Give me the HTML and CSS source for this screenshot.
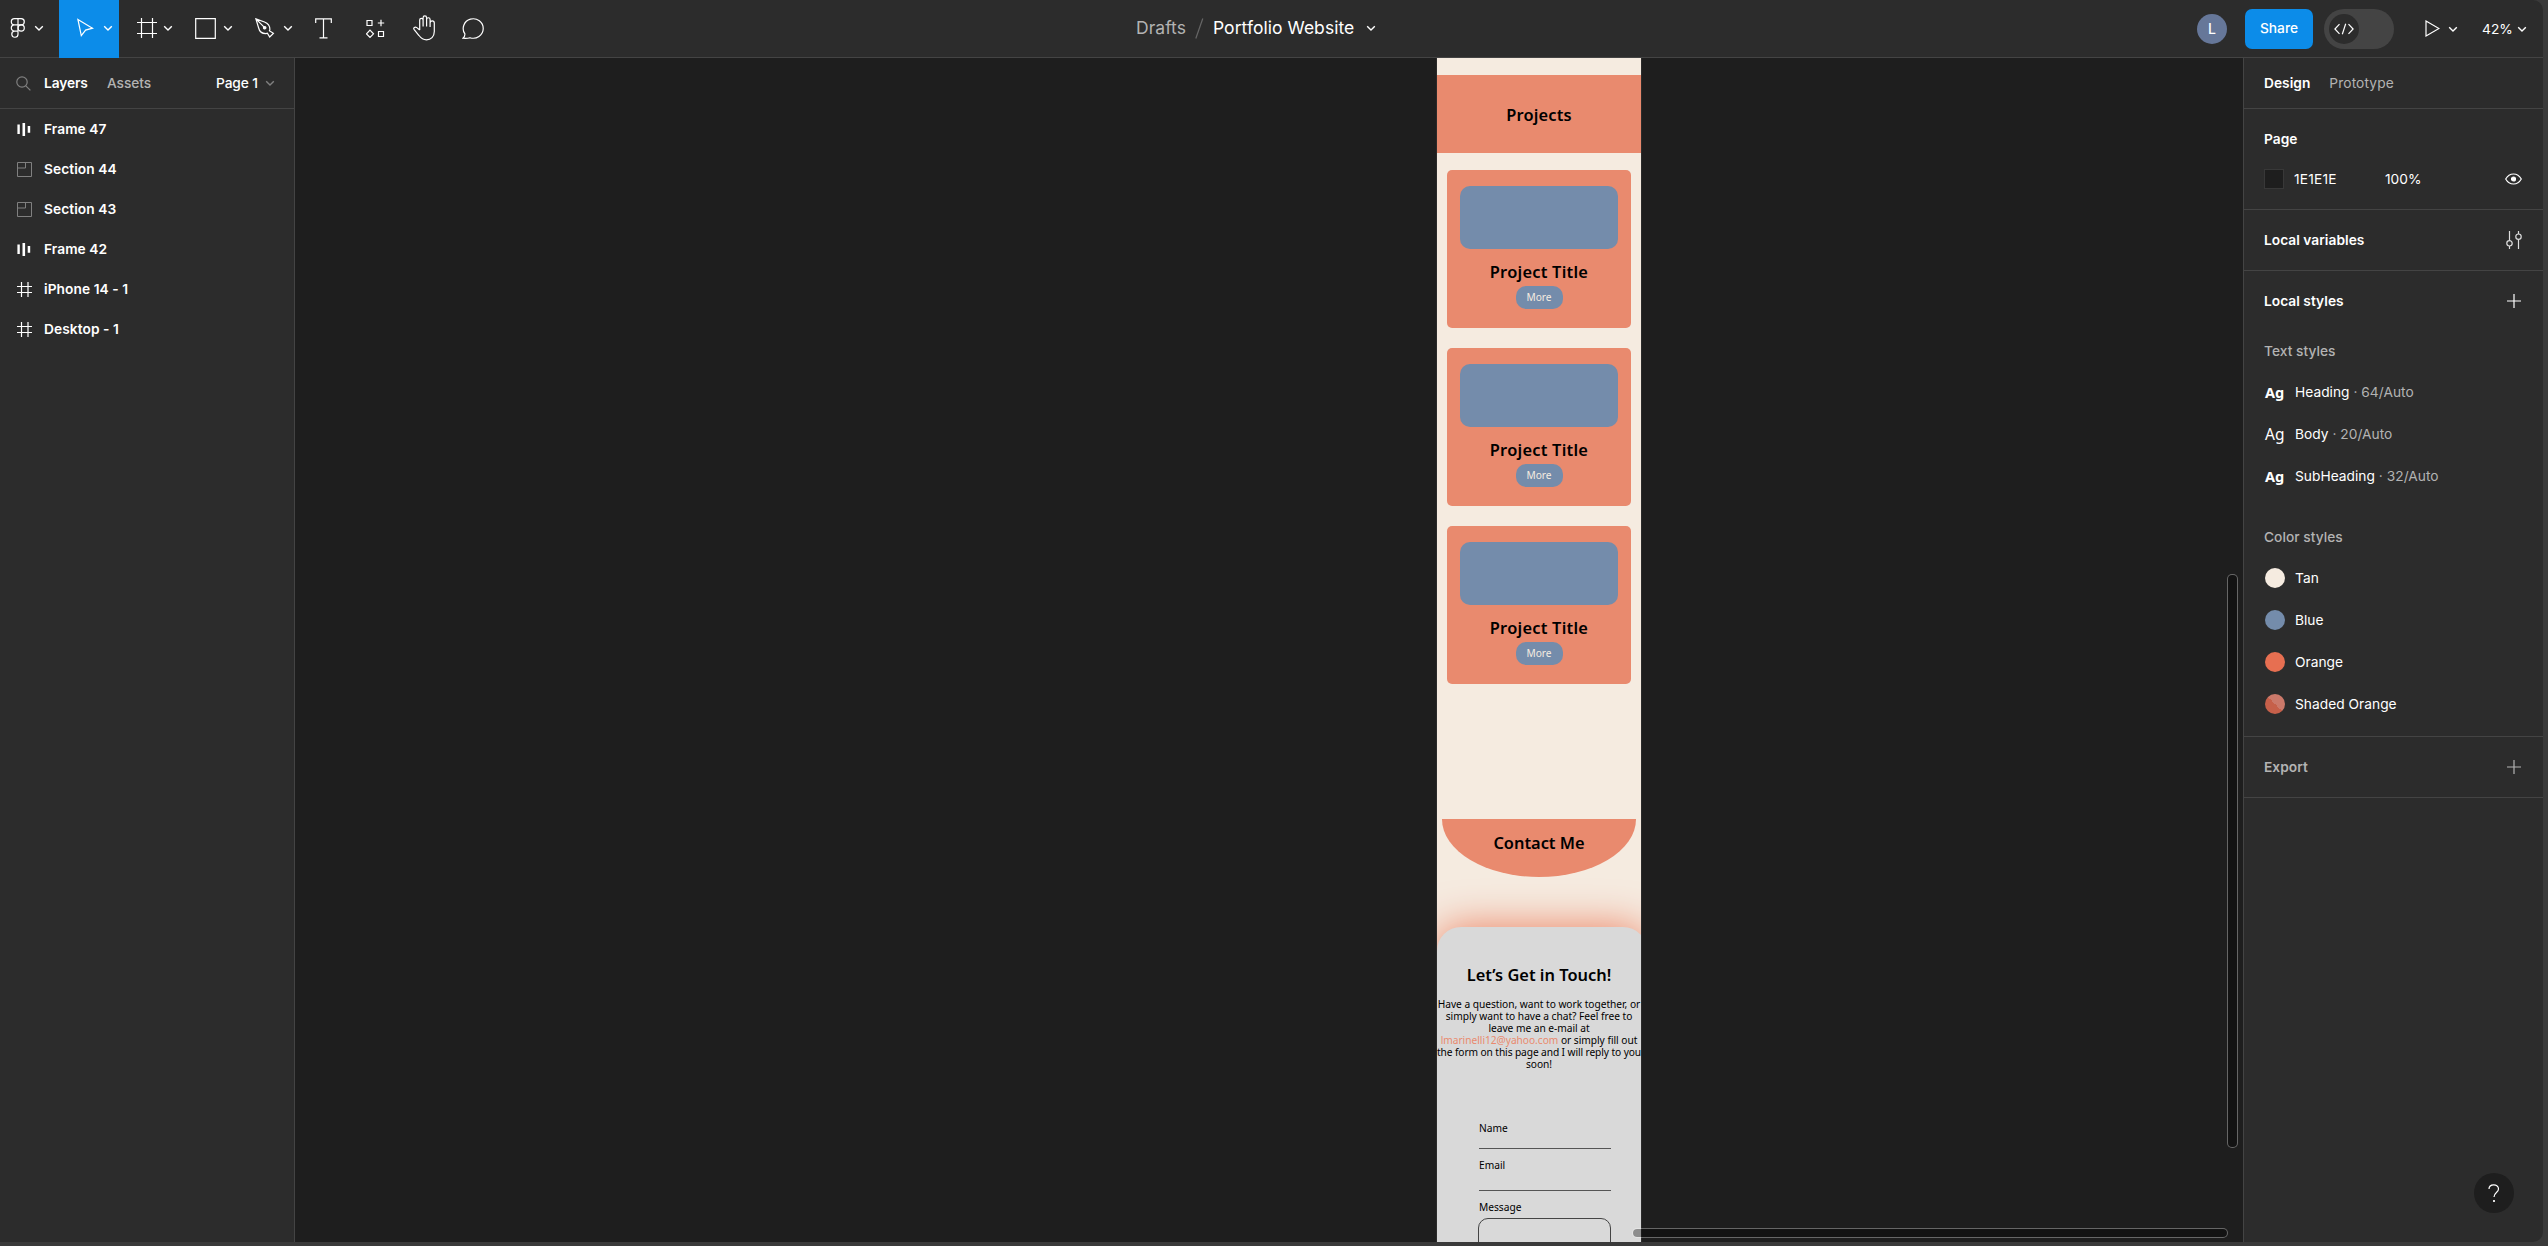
FILE: index.html
```html
<!DOCTYPE html>
<html lang="en">
<head>
<meta charset="utf-8">
<title>Portfolio Website</title>
<link rel="stylesheet" href="styles.css">
</head>
<body>
<svg class="defs" width="0" height="0">
  <symbol id="chev" viewBox="0 0 10 8"><path d="M1.2 2.2 5 5.9 8.8 2.2"/></symbol>
  <symbol id="autolayout" viewBox="0 0 15 15"><path class="solid" d="M.4 2.500h2.400v9.600H.4zM5.500 1h2.600v13H5.500zM10.700 4h2.500v6.800h-2.500z"/></symbol>
  <symbol id="section" viewBox="0 0 15 15"><path d="M.5.5h14v14H.5zM.5 6h8V.5"/></symbol>
  <symbol id="frame" viewBox="0 0 15 15"><path d="M4.500 0v15M11 0v15M0 4.500h15M0 10.500h15"/></symbol>
  <symbol id="plus" viewBox="0 0 14 14"><path d="M7 0v14M0 7h14"/></symbol>
</svg>
<div class="app">
  <header class="toolbar">
    <nav class="tools">
      <div class="tool menu">
        <svg width="16" height="22" viewBox="0 0 16 22"><path d="M8 1.700H4.400a3.100 3.100 0 0 0 0 6.200H8zM8 1.700h3.200a3.100 3.100 0 0 1 0 6.200H8zM8 7.900H4.400a3.100 3.100 0 0 0 0 6.200H8zM8 14.100H4.400A3.100 3.100 0 1 0 8 17.200z"/><circle cx="11.200" cy="11" r="3.100"/></svg>
        <svg class="chev" width="10" height="8"><use href="#chev"/></svg>
      </div>
      <div class="tool select">
        <svg width="18" height="20" viewBox="0 0 18 20"><path d="M1.900 1.400 16.500 10.200l-6.900 1.900-4.300 5.500z"/></svg>
        <svg class="chev" width="10" height="8"><use href="#chev"/></svg>
      </div>
      <div class="tool frame-tool">
        <svg width="20" height="20" viewBox="0 0 20 20"><path d="M4.500 0v20M15.500 0v20M0 4.500h20M0 15.500h20"/></svg>
        <svg class="chev" width="10" height="8"><use href="#chev"/></svg>
      </div>
      <div class="tool shape-tool">
        <svg width="21" height="21" viewBox="0 0 21 21"><path d="M.7.7h19.600v19.600H.7z"/></svg>
        <svg class="chev" width="10" height="8"><use href="#chev"/></svg>
      </div>
      <div class="tool pen-tool">
        <svg width="20" height="20" viewBox="0 0 20 20"><path d="M.9.900 9.500 4c3.500 1.300 5.400 4 5.400 7.500l-.5 1.300 4 2.500-3.700 3.700-2.300-3.800-1.500.4C7 15.600 4.300 13.200 3.500 9.500zM.9.9l8 8"/><circle class="dot" cx="9.700" cy="9.700" r="1.200"/></svg>
        <svg class="chev" width="10" height="8"><use href="#chev"/></svg>
      </div>
      <div class="tool text-tool">
        <svg width="17" height="21" viewBox="0 0 17 21"><path d="M.7 5V.9h15.600V5M8.500.9v19M4.500 19.900h8"/></svg>
      </div>
      <div class="tool resources">
        <svg width="19" height="19" viewBox="0 0 19 19"><path d="M1 1.500h5v5H1zM12.500 12.500h5v5h-5zM15 .8v6.400M11.800 4h6.400M4 11.200l3.500 3.600L4 18.400.5 14.800z"/></svg>
      </div>
      <div class="tool hand">
        <svg width="23" height="26" viewBox="0 0 23 26"><path d="M6.700 15V5a1.700 1.700 0 0 1 3.400 0M10.100 11.500V2.700a1.700 1.700 0 0 1 3.500 0V11.500M13.600 4.500a1.700 1.700 0 0 1 3.500 0v7.500M17.100 8a1.800 1.800 0 0 1 4.200 0v8.500c0 5.200-3.400 8.300-7.800 8.300-3.500 0-5.300-1.300-7.500-4.300L1 14.300c-.9-1.400 1-2.900 2.500-1.900L6.700 15M10.100 5v6.500"/></svg>
      </div>
      <div class="tool comment">
        <svg width="23" height="21" viewBox="0 0 23 21"><path d="M1 20.200c1.500-1.400 2-2.400 1.900-4.300A10 9.700 0 1 1 8 19.700c-2.300.7-4.500.7-7 .5z"/></svg>
      </div>
    </nav>
    <div class="title">
      <span class="drafts">Drafts</span>
      <svg width="9" height="21" viewBox="0 0 9 21"><path class="slash" d="M.8 20.500 7.800.5"/></svg>
      <span class="name">Portfolio Website</span>
      <svg class="chev" width="10" height="8"><use href="#chev"/></svg>
    </div>
    <div class="actions">
      <div class="avatar">L</div>
      <div class="share">Share</div>
      <div class="toggle"><div class="knob">
        <svg width="20" height="12" viewBox="0 0 20 12"><path d="M5.500 1.200.9 6l4.600 4.800M14.500 1.200 19.100 6l-4.600 4.800M11.700.8 8.300 11.200"/></svg>
      </div></div>
      <svg class="play" width="15" height="17" viewBox="0 0 15 17"><path d="M1 1v15l13-7.500z"/></svg>
      <svg class="chev" width="10" height="8"><use href="#chev"/></svg>
      <span class="zoom">42%</span>
      <svg class="chev" width="10" height="8"><use href="#chev"/></svg>
    </div>
  </header>
  <div class="body">
    <aside class="left">
      <div class="tabs">
        <svg class="search" width="15" height="15" viewBox="0 0 15 15"><circle cx="6" cy="6" r="5.200"/><path d="m9.800 9.800 4.600 4.600"/></svg>
        <b class="layers-tab">Layers</b><span class="assets-tab">Assets</span>
        <span class="page-name">Page 1</span>
        <svg class="chev dim" width="10" height="8"><use href="#chev"/></svg>
      </div>
      <ul class="layers">
        <li><svg width="15" height="15"><use href="#autolayout"/></svg>Frame 47</li>
        <li class="sec"><svg width="15" height="15"><use href="#section"/></svg>Section 44</li>
        <li class="sec"><svg width="15" height="15"><use href="#section"/></svg>Section 43</li>
        <li><svg width="15" height="15"><use href="#autolayout"/></svg>Frame 42</li>
        <li><svg width="15" height="15"><use href="#frame"/></svg>iPhone 14 - 1</li>
        <li><svg width="15" height="15"><use href="#frame"/></svg>Desktop - 1</li>
      </ul>
    </aside>
    <main class="canvas">
      <div class="phone">
        <div class="projects"><h2>Projects</h2></div>
        <div class="cards">
          <div class="card"><div class="thumb"></div><h2>Project Title</h2><div class="more">More</div></div>
          <div class="card"><div class="thumb"></div><h2>Project Title</h2><div class="more">More</div></div>
          <div class="card"><div class="thumb"></div><h2>Project Title</h2><div class="more">More</div></div>
        </div>
        <div class="contact"><h2>Contact Me</h2></div>
        <div class="touch">
          <h2>Let’s Get in Touch!</h2>
          <div class="copy">
            <p>Have a question, want to work together, or</p>
            <p>simply want to have a chat? Feel free to</p>
            <p>leave me an e-mail at</p>
            <p><span>lmarinelli12@yahoo.com</span> or simply fill out</p>
            <p class="wide">the form on this page and I will reply to you</p>
            <p>soon!</p>
          </div>
          <div class="form">
            <div class="field name-field">Name</div>
            <div class="field email-field">Email</div>
            <div class="message">Message</div>
            <div class="box"></div>
          </div>
        </div>
      </div>
      <div class="vscroll"></div>
      <div class="hscroll"></div>
    </main>
    <aside class="right">
      <div class="tabs"><b>Design</b><span class="prototype">Prototype</span></div>
      <section class="page">
        <b>Page</b>
        <div class="fill"><i class="swatch"></i><span class="hex">1E1E1E</span><span class="pct">100%</span>
          <svg width="17" height="12" viewBox="0 0 17 12"><path d="M.7 6C2.500 2.800 5.200 1 8.500 1s6 1.800 7.800 5c-1.800 3.200-4.500 5-7.800 5S2.500 9.200.7 6z"/><circle class="dot" cx="8.500" cy="6" r="2"/></svg>
        </div>
      </section>
      <section class="row"><b>Local variables</b>
        <svg class="sliders" width="16" height="18" viewBox="0 0 16 18"><path d="M3.500 0v9.500M3.500 15v3M12.500 0v3M12.500 8.500V18"/><circle cx="3.500" cy="12.300" r="2.700"/><circle cx="12.500" cy="5.700" r="2.700"/></svg>
      </section>
      <section class="styles">
        <div class="styles-head"><b>Local styles</b><svg width="14" height="14"><use href="#plus"/></svg></div>
        <h3>Text styles</h3>
        <div class="style"><i class="ag bold">Ag</i><span>Heading<em> · 64/Auto</em></span></div>
        <div class="style"><i class="ag">Ag</i><span>Body<em> · 20/Auto</em></span></div>
        <div class="style"><i class="ag bold">Ag</i><span>SubHeading<em> · 32/Auto</em></span></div>
        <h3 class="colors">Color styles</h3>
        <div class="style"><i class="chip tan"></i><span>Tan</span></div>
        <div class="style"><i class="chip blue"></i><span>Blue</span></div>
        <div class="style"><i class="chip orange"></i><span>Orange</span></div>
        <div class="style"><i class="chip shaded"></i><span>Shaded Orange</span></div>
      </section>
      <section class="row export"><b>Export</b><svg width="14" height="14"><use href="#plus"/></svg></section>
      <div class="help"><svg width="12" height="19" viewBox="0 0 12 19"><path d="M1 5C1 2.500 3 .9 5.700.9S10.500 2.600 10.500 5c0 3.500-4.500 3.700-4.500 8"/><circle class="dot" cx="6" cy="17" r=".5"/></svg></div>
    </aside>
  </div>
</div>
</body>
</html>
```
FILE: styles.css
```css
* { box-sizing: border-box; margin: 0; padding: 0; }
html, body { height: 100%; overflow: hidden; }
body { background: #3a3a3a; font: 500 13.75px/20px Inter, "Liberation Sans", sans-serif; color: #fff; letter-spacing: 0.02px; }
b { font-weight: 600; }
i, em { font-style: normal; }
svg { display: block; flex: none; fill: none; stroke: #fff; stroke-width: 1.2; }
.defs { position: absolute; }
.solid { fill: #fff; stroke: none; }
.dot { fill: #fff; }
.chev { stroke-width: 1.4; }

.app { width: 2543px; height: 1242px; background: #2c2c2c; border-radius: 0 10px 10px 0; overflow: hidden; display: flex; flex-direction: column; }

.toolbar { height: 58px; flex: none; border-bottom: 1px solid #444; display: grid; grid-template-columns: 1136px 1fr auto; }
.tools { display: flex; }
.tool { display: flex; align-items: center; height: 58px; padding-bottom: 2px; }
.menu { width: 59px; padding-left: 10px; gap: 8px; }
.select { width: 60px; background: #0c8ce9; padding-left: 17px; gap: 9px; }
.frame-tool { margin-left: 18px; gap: 6px; }
.shape-tool { margin-left: 22px; gap: 7px; }
.pen-tool { margin-left: 22px; gap: 8px; }
.text-tool { margin-left: 22px; }
.resources { margin-left: 34px; }
.hand { margin-left: 28px; }
.comment { margin-left: 26px; }
.title { display: flex; align-items: center; padding-bottom: 2px; font-size: 17.5px; font-weight: 400; letter-spacing: .04px; }
.drafts { color: #b3b3b3; width: 59px; }
.slash { stroke: #666; }
.name { margin: 0 12px 0 9px; }
.actions { display: flex; align-items: center; padding: 0 16px 1px 0; }
.avatar { width: 30px; height: 30px; border-radius: 50%; background: #667799; display: grid; place-items: center; font-size: 14px; }
.share { width: 68px; height: 40px; margin-left: 18px; border-radius: 7px; background: #0c8ce9; display: grid; place-items: center; padding-bottom: 1px; }
.toggle { width: 70px; height: 40px; margin-left: 11px; padding: 5px; border-radius: 20px; background: #444; }
.knob { width: 30px; height: 30px; border-radius: 50%; background: #2c2c2c; display: grid; place-items: center; }
.play { margin: 0 8px 0 31px; }
.zoom { margin: 0 6px 0 24px; font-weight: 400; width: 29px; }

.body { flex: 1; min-height: 0; display: grid; grid-template-columns: 295px 1fr 300px; }
.left { border-right: 1px solid #444; }
.tabs { height: 51px; border-bottom: 1px solid #444; display: flex; align-items: center; }
.left .tabs { padding-left: 16px; letter-spacing: -.1px; }
.search { stroke: #808080; }
.layers-tab { margin-left: 13px; width: 63px; }
.assets-tab { color: #b3b3b3; width: 109px; }
.page-name { width: 49px; }
.dim { stroke: #808080; }
.layers { list-style: none; letter-spacing: .06px; }
.layers li { height: 40px; display: flex; align-items: center; gap: 12px; padding-left: 17px; font-weight: 600; }
.layers .sec svg { stroke: #808080; stroke-width: 1; }

.canvas { position: relative; background: #1e1e1e; overflow: hidden; padding-left: 1142px; }
.phone { width: 204px; height: 100%; background: #f5ebe0; padding-top: 16.700px; overflow: hidden; font: 400 10.200px/12.100px "Noto Sans", sans-serif; color: #000; letter-spacing: 0; box-shadow: 0 0 0 1px #2b2b2b; }
.phone h2 { font-size: 16.400px; line-height: 20px; font-weight: 600; text-align: center; white-space: nowrap; }
.projects { height: 78.600px; background: #e98a6e; padding-top: 30.500px; }
.projects h2 { letter-spacing: .15px; }
.cards { display: flex; flex-direction: column; gap: 20.700px; padding: 17.200px 10.400px 0; }
.card { height: 157.300px; border-radius: 5px; background: #e98a6e; display: flex; flex-direction: column; align-items: center; padding-top: 15.700px; }
.thumb { width: 157.500px; height: 63px; border-radius: 10px; background: #748cab; }
.card h2 { margin-top: 13px; letter-spacing: .25px; }
.more { width: 47px; height: 22.700px; margin-top: 4px; border-radius: 10px; background: #748cab; color: #f5ebe0; display: grid; place-items: center; }
.contact { width: 194px; height: 57.800px; margin: 135.200px 5px 0; border-radius: 0 0 97px 97px / 0 0 57.800px 57.800px; background: #e98a6e; padding-top: 14px; }
.touch { width: 210px; height: 400px; margin-top: 50.700px; background: #d9d9d9; border-radius: 24px; box-shadow: 0 0 40px #ec7f60; }
.touch h2 { width: 204px; padding-top: 37.500px; }
.copy { width: 204px; margin-top: 13px; letter-spacing: -.03px; }
.copy p { height: 12.100px; display: flex; justify-content: center; white-space: pre; }
.copy .wide { letter-spacing: -.1px; }
.copy span { color: #e98a6e; }
.form { width: 132px; margin: 51.500px 0 0 42px; }
.field { border-bottom: 1px solid #555; height: 42px; }
.name-field { height: 27px; }
.email-field { padding-top: 10px; }
.message { padding-top: 10px; }
.box { height: 44px; margin: 5px 0 0 -1px; border: 1px solid #444; border-radius: 10px; width: 133px; }
.vscroll, .hscroll { position: absolute; background: rgba(0, 0, 0, .35) padding-box; border: 1px solid rgba(255, 255, 255, .32); border-radius: 5px; }
.vscroll { right: 5px; top: 516px; width: 11px; height: 574px; }
.hscroll { right: 15px; bottom: 4px; width: 596px; height: 10px; }

.right { position: relative; border-left: 1px solid #444; }
.right .tabs { padding-left: 20px; }
.prototype { color: #b3b3b3; font-weight: 400; margin-left: 19px; letter-spacing: .1px; }
.right section { border-bottom: 1px solid #444; padding: 0 22px 0 20px; }
.page { height: 101px; padding-top: 20px !important; }
.fill { display: flex; align-items: center; margin-top: 20px; font-weight: 400; }
.fill svg { margin-left: auto; margin-right: -1px; }
.swatch { width: 20px; height: 20px; background: #1e1e1e; border: 1px solid #383838; }
.hex { width: 91px; margin-left: 10px; letter-spacing: .2px; }
.row, .styles-head { height: 61px; display: flex; align-items: center; justify-content: space-between; }
.styles-head { height: 60px; }
.row svg { stroke: #ddd; }
.row .sliders { margin-right: -1px; }
.styles { height: 466px; }
.styles h3 { font-size: inherit; font-weight: 500; color: #b3b3b3; height: 40px; line-height: 40px; }
.styles h3.colors { margin-top: 19px; height: 41px; line-height: 43px; }
.style { height: 42px; display: flex; align-items: center; gap: 10px; font-weight: 400; padding-left: 1px; }
.style em { color: #b3b3b3; }
.ag { width: 20px; font: 400 15.500px/20px "Noto Sans", sans-serif; letter-spacing: 0; }
.bold { font-weight: 700; font-size: 14.500px; }
.chip { width: 20px; height: 20px; border-radius: 50%; }
.tan { background: #f5ebe0; }
.blue { background: #748cab; }
.orange { background: #e76f51; }
.shaded { background: linear-gradient(45deg, #c6604a 50%, #cb796a 50%); }
.export { color: #b3b3b3; }
.export svg { stroke: #b3b3b3; }
.help { position: absolute; right: 29px; bottom: 29px; width: 40px; height: 40px; border-radius: 50%; background: #1e1e1e; display: grid; place-items: center; }
```
